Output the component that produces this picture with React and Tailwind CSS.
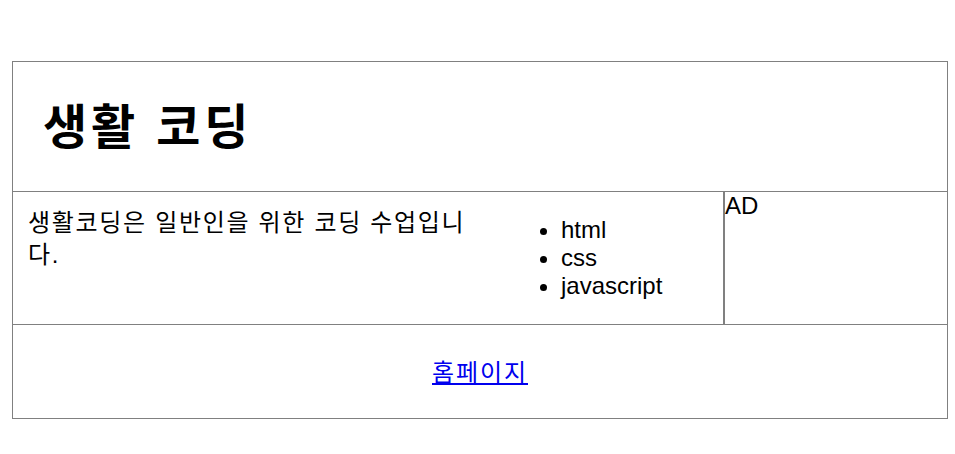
export default function App() {
  return (
    <div className="pt-[61px] px-[12px] font-['Liberation_Sans','Noto_Sans_CJK_KR',sans-serif] text-[24px] text-black bg-white min-h-[454px]">
      <div className="w-[936px] border border-[#808080]">
        <header className="h-[130px] border-b border-[#808080] flex items-center pl-[30px] pt-[3px]">
          <h1 className="text-[48px] font-bold leading-none tracking-[0.08em]">생활 코딩</h1>
        </header>
        <div className="grid grid-cols-[488px_223px_223px]">
          <article className="px-[15px] pt-[15px] leading-[32px] tracking-[0.07em]">
            생활코딩은 일반인을 위한 코딩 수업입니다.
          </article>
          <nav className="border-r border-[#808080]">
            <ul className="list-disc pl-[60px] my-[24px] leading-[28px]">
              <li>html</li>
              <li>css</li>
              <li>javascript</li>
            </ul>
          </nav>
          <aside className="border-l border-[#808080] leading-[28px]">AD</aside>
        </div>
        <footer className="h-[94px] border-t border-[#808080] flex items-center justify-center">
          <a href="#" className="text-[#0000ee] underline leading-[28px] tracking-[0.08em] pt-[2px]">홈페이지</a>
        </footer>
      </div>
    </div>
  );
}
